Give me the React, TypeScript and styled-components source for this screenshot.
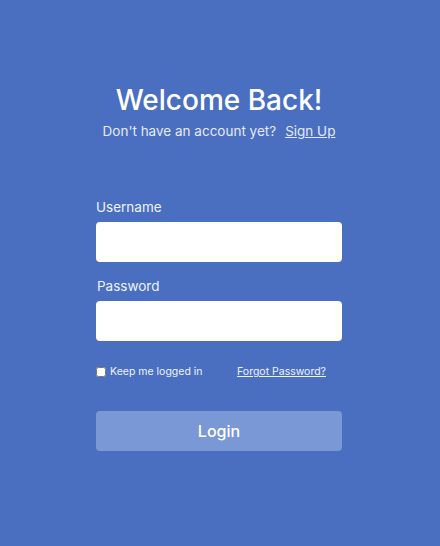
import styled, { createGlobalStyle } from 'styled-components';
import { useState } from 'react';

const GlobalStyle = createGlobalStyle`
    html, body {
        margin: 0;
        padding: 0;
        background: #4a6fc0;
    }
    body {
        font-family: Inter, "Open Sans", sans-serif;
    }
`

export default function App(){
    const [remember, setRemember] = useState(false);
    return(
        <Container>
            <GlobalStyle/>
            <Header>
                <Title>Welcome Back!</Title>
                <SubTitle>
                    Don't have an account yet?
                    <SignUpLink href="#">Sign Up</SignUpLink>
                </SubTitle>
            </Header>
            <Form onSubmit={(e) => e.preventDefault()}>
                <Field>
                    <Label htmlFor="username">Username</Label>
                    <Input id="username" type="text"/>
                </Field>
                <Field>
                    <Label htmlFor="password" indent>Password</Label>
                    <Input id="password" type="password"/>
                </Field>
                <OptionRow>
                    <CheckLabel>
                        <CheckBox type="checkbox" checked={remember} onChange={() => setRemember(!remember)}/>
                        Keep me logged in
                    </CheckLabel>
                    <ForgotLink href="#">Forgot Password?</ForgotLink>
                </OptionRow>
                <LoginBtn type="submit">Login</LoginBtn>
            </Form>
        </Container>
    );
}

const Container = styled.div`
    width: 100%;
    min-height: 546px;
    display: flex;
    flex-direction: column;
    align-items: center;
    padding-top: 81px;
    padding-right: 2px;
    box-sizing: border-box;
    color: #FFF;
`
const Header = styled.div`
    display: flex;
    flex-direction: column;
    align-items: center;
`
const Title = styled.h1`
    margin: 0;
    font-size: 28px;
    font-weight: 500;
    line-height: 38px;
`
const SubTitle = styled.p`
    margin: 2px 0 0 0;
    font-size: 13.5px;
    line-height: 20px;
    color: #E4EAF6;
`
const SignUpLink = styled.a`
    margin-left: 9px;
    color: #E4EAF6;
    text-decoration: underline;
`
const Form = styled.form`
    width: 246px;
    margin-top: 57px;
    display: flex;
    flex-direction: column;
    gap: 15px;
`
const Field = styled.div`
    display: flex;
    flex-direction: column;
    gap: 6px;
`
const Label = styled.label<{indent?: boolean}>`
    font-size: 13.5px;
    line-height: 18px;
    color: #EEF2FA;
    padding-left: ${(props: {indent?: boolean}) => (props.indent ? '1px' : '0')};
`
const Input = styled.input`
    height: 40px;
    border: none;
    border-radius: 4px;
    background: #FFF;
    padding: 0 10px;
    box-sizing: border-box;
    outline: none;
`
const OptionRow = styled.div`
    display: flex;
    align-items: center;
    justify-content: space-between;
    margin-top: 9px;
    padding-right: 16px;
`
const CheckLabel = styled.label`
    display: flex;
    align-items: center;
    gap: 4px;
    font-size: 10.5px;
    color: #EEF2FA;
`
const CheckBox = styled.input`
    width: 10px;
    height: 10px;
    margin: 0;
    accent-color: #FFF;
`
const ForgotLink = styled.a`
    font-size: 10.5px;
    color: #EEF2FA;
    text-decoration: underline;
`
const LoginBtn = styled.button`
    margin-top: 18px;
    height: 40px;
    border: none;
    border-radius: 4px;
    background: #7a97d6;
    color: #FFF;
    font-family: inherit;
    font-size: 16px;
    font-weight: 500;
    cursor: pointer;
`
